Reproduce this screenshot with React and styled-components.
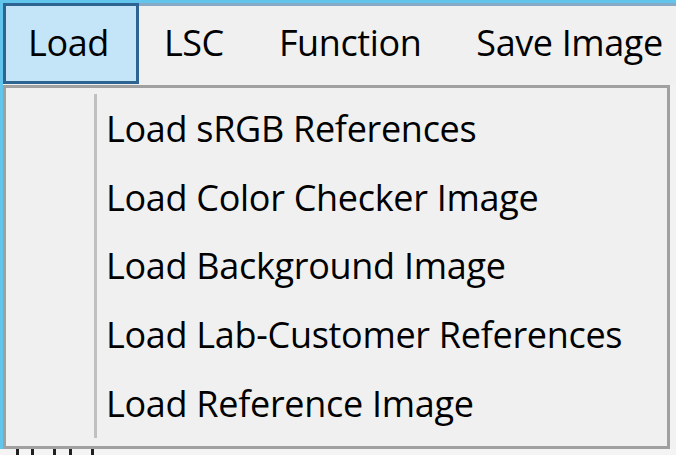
import React from 'react';
import styled, { createGlobalStyle } from 'styled-components';

const GlobalStyle = createGlobalStyle`
  html, body {
    margin: 0;
    padding: 0;
    background: #ffffff;
  }
  body {
    font-family: "Open Sans", "Noto Sans", sans-serif;
    color: #000;
  }
`;

const Screen = styled.div`
  width: 676px;
  height: 455px;
  display: flex;
  flex-direction: column;
  overflow: hidden;
  background: #ffffff;
`;

const TopStrip = styled.div`
  height: 3px;
  flex: none;
  background: #62c5ec;
`;

const Middle = styled.div`
  display: flex;
  height: 446px;
  flex: none;
`;

const SideStrip = styled.div`
  width: 3px;
  flex: none;
  background: #62c5ec;
`;

const Main = styled.div`
  flex: 1;
  display: flex;
  flex-direction: column;
  background: #f2f2f2;
`;

const MenuBar = styled.div`
  height: 82px;
  flex: none;
  display: flex;
  align-items: stretch;
  background: #f0f0f0;
  box-shadow: inset 0 3px 0 #87aac6;
`;

const MenuItem = styled.div`
  display: flex;
  align-items: center;
  height: 81px;
  box-sizing: border-box;
  padding: 0 27px 2px 22px;
  border: 3px solid ${p => (p.$active ? '#2e6491' : 'transparent')};
  background: ${p => (p.$active ? '#c4e4f7' : 'transparent')};
  font-size: 36px;
  letter-spacing: -0.4px;
  white-space: nowrap;
`;

const Dropdown = styled.div`
  width: 667px;
  height: 364px;
  box-sizing: border-box;
  border: 3px solid #a0a0a0;
  background: #f0f0f0;
  padding: 6px 0 0 88px;
`;

const ItemList = styled.div`
  height: 344px;
  border-left: 3px solid #c0c0c0;
  display: flex;
  flex-direction: column;
`;

const DropItem = styled.div`
  height: 68.8px;
  display: flex;
  align-items: center;
  padding-left: 9px;
  font-size: 36px;
  letter-spacing: -0.3px;
  white-space: nowrap;
`;

const Footer = styled.div`
  height: 6px;
  flex: none;
  display: flex;
  background: #f4f4f4;
`;

const Tick = styled.span`
  width: 3px;
  height: 6px;
  margin-left: ${p => p.$gap}px;
  background: #202020;
`;

const menus = ['Load', 'LSC', 'Function', 'Save Image'];

const loadItems = [
  'Load sRGB References',
  'Load Color Checker Image',
  'Load Background Image',
  'Load Lab-Customer References',
  'Load Reference Image',
];

const ticks = [16, 12, 19, 13, 19];

export default function App() {
  return (
    <>
      <GlobalStyle />
      <Screen>
        <TopStrip />
        <Middle>
          <SideStrip />
          <Main>
            <MenuBar>
              {menus.map((m, i) => (
                <MenuItem key={m} $active={i === 0}>
                  {m}
                </MenuItem>
              ))}
            </MenuBar>
            <Dropdown>
              <ItemList>
                {loadItems.map(t => (
                  <DropItem key={t}>{t}</DropItem>
                ))}
              </ItemList>
            </Dropdown>
          </Main>
        </Middle>
        <Footer>
          {ticks.map((g, i) => (
            <Tick key={i} $gap={g} />
          ))}
        </Footer>
      </Screen>
    </>
  );
}
